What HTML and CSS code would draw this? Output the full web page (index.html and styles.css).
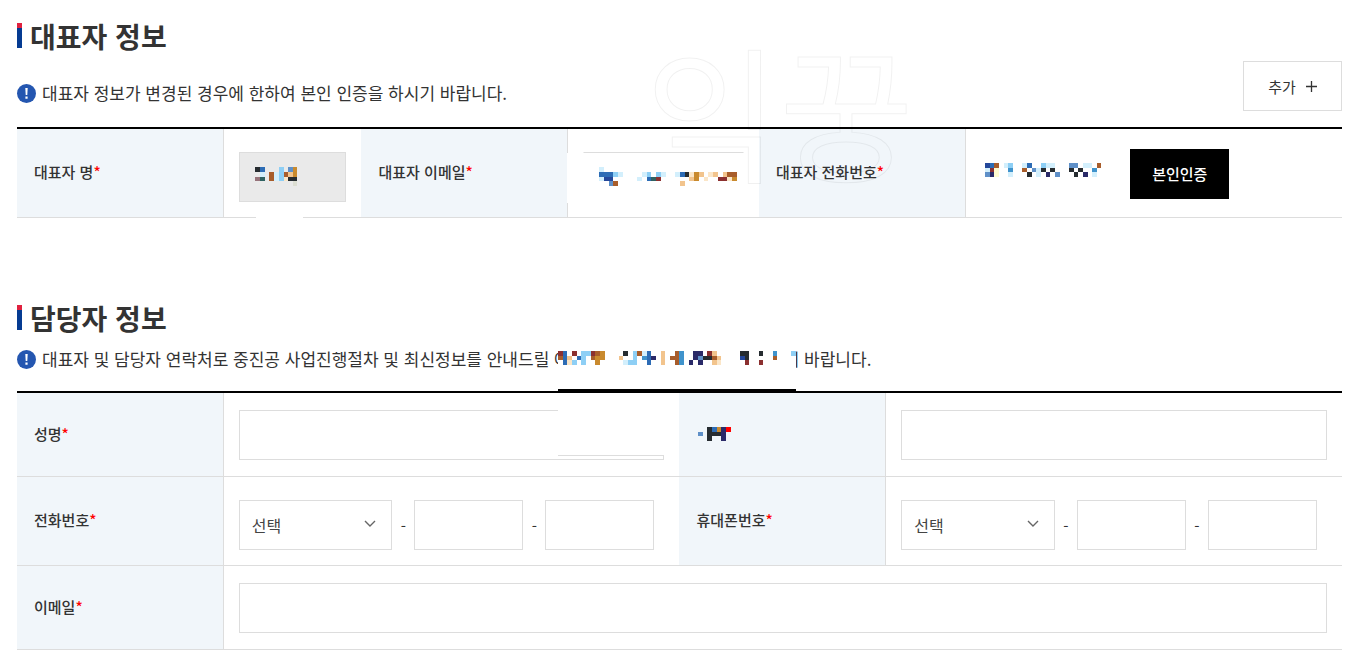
FILE: index.html
```html
<!DOCTYPE html>
<html lang="ko">
<head>
<meta charset="utf-8">
<title>대표자 정보</title>
<link rel="stylesheet" href="styles.css">
</head>
<body>
<main class="page">
  <section class="section">
    <h2 class="title">대표자 정보</h2>
    <div class="toolbar">
      <p class="notice">
        <svg class="notice-icon" viewBox="0 0 19 19" aria-hidden="true"><circle cx="9.500" cy="9.500" r="9.500" fill="#2456b0"/><path d="M8.300 4h2.400l-.4 7H8.700zM8.400 12.500h2.200v2.200H8.400z" fill="#fff"/></svg>
        <span>대표자 정보가 변경된 경우에 한하여 본인 인증을 하시기 바랍니다.</span>
      </p>
      <button type="button" class="btn btn-line">추가 <svg class="plus" viewBox="0 0 11 11" aria-hidden="true"><path d="M5.500 0v11M0 5.500h11" stroke="#333" stroke-width="1.300"/></svg></button>
    </div>
    <table class="form">
      <colgroup><col class="c-label"><col class="c-name"><col class="c-label"><col class="c-mail"><col class="c-label"><col></colgroup>
      <tbody>
        <tr>
          <th scope="row"><label for="ceo-name">대표자 명<em>*</em></label></th>
          <td class="low">
            <div class="masked">
              <input id="ceo-name" class="field field-off" type="text" disabled>
              <svg class="mosaic value" data-rows="kb...l.so/.p.aplato/mg.aplwkk/........d"></svg>
            </div>
            <span class="line-gap"></span>
          </td>
          <th scope="row"><label for="ceo-mail">대표자 이메일<em>*</em></label></th>
          <td class="low">
            <span class="side-gap"></span>
            <div class="masked">
              <input id="ceo-mail" class="field field-open" type="email">
              <svg class="mosaic value" data-rows="p............................/bbblp....pl.lp..pbkwot.wt.taa/pBB.....p.bgr......to.w..rrwo/..sa.............t..........."></svg>
            </div>
          </td>
          <th scope="row">대표자 전화번호<em>*</em></th>
          <td>
            <div class="verify">
              <svg class="mosaic mosaic-3" data-rows="Bba.pl..pb..lpp...ss.pp.a/pry..c..a.spk.k...k.k..c./sny..p...k.p.n.s...k.n.p."></svg>
              <button type="button" class="btn btn-dark">본인인증</button>
            </div>
          </td>
        </tr>
      </tbody>
    </table>
    <div class="watermark" aria-hidden="true">익꿍</div>
  </section>

  <section class="section">
    <h2 class="title">담당자 정보</h2>
    <p class="notice notice-manager">
      <svg class="notice-icon" viewBox="0 0 19 19" aria-hidden="true"><circle cx="9.500" cy="9.500" r="9.500" fill="#2456b0"/><path d="M8.300 4h2.400l-.4 7H8.700zM8.400 12.500h2.200v2.200H8.400z" fill="#fff"/></svg>
      <span>대표자 및 담당자 연락처로 중진공 사업진행절차 및 최신정보를 안내드릴 예</span>
      <span class="cover"><svg class="mosaic mosaic-3" data-rows="rb.r.llrao....k.lapb..t..ac..nn.rt.....kk..k..c...l/abt.bl.aoo...t..l.cbn.t.aac..nskkat....Bk.....a..../.bwl.l..o.....pll..b..t..ac.n.n..tw.....r..r......."></svg></span>
      <span>기 바랍니다.</span>
    </p>
    <table class="form">
      <colgroup><col class="c-label"><col class="c-half"><col class="c-label"><col></colgroup>
      <tbody>
        <tr>
          <th scope="row"><label for="m-name">성명<em>*</em></label></th>
          <td>
            <div class="masked">
              <input id="m-name" class="field" type="text">
              <span class="patch"></span>
            </div>
          </td>
          <th scope="row"><svg class="mosaic mosaic-3 mosaic-label" data-rows="..kbonR/s.kkkn./..k..n."></svg></th>
          <td><input class="field" type="text" aria-label="담당자 항목"></td>
        </tr>
        <tr>
          <th scope="row"><label for="m-tel">전화번호<em>*</em></label></th>
          <td class="low">
            <div class="phone">
              <span class="select-box"><select id="m-tel" class="field"><option>선택</option></select><svg class="chevron" viewBox="0 0 12 8" aria-hidden="true"><path d="M1 1l5 5 5-5" fill="none" stroke="#666" stroke-width="1.400"/></svg></span>
              <span class="dash">-</span>
              <input class="field" type="tel" aria-label="전화번호 가운데 자리">
              <span class="dash">-</span>
              <input class="field" type="tel" aria-label="전화번호 끝자리">
            </div>
          </td>
          <th scope="row"><label for="m-cell">휴대폰번호<em>*</em></label></th>
          <td class="low">
            <div class="phone">
              <span class="select-box"><select id="m-cell" class="field"><option>선택</option></select><svg class="chevron" viewBox="0 0 12 8" aria-hidden="true"><path d="M1 1l5 5 5-5" fill="none" stroke="#666" stroke-width="1.400"/></svg></span>
              <span class="dash">-</span>
              <input class="field" type="tel" aria-label="휴대폰번호 가운데 자리">
              <span class="dash">-</span>
              <input class="field" type="tel" aria-label="휴대폰번호 끝자리">
            </div>
          </td>
        </tr>
        <tr>
          <th scope="row"><label for="m-mail">이메일<em>*</em></label></th>
          <td colspan="3"><input id="m-mail" class="field" type="email"></td>
        </tr>
      </tbody>
    </table>
  </section>
</main>
<script src="mosaic.js"></script>
</body>
</html>
```

FILE: styles.css
```css
* { box-sizing: border-box; }
body {
  margin: 0;
  background: #fff;
  color: #333;
  font-family: "Noto Sans CJK KR", sans-serif;
  font-size: 15px;
}
.page { padding: 16px 24px 20px 17px; }
.section { position: relative; }
.section + .section { margin-top: 80px; }

.title {
  display: flex;
  align-items: center;
  gap: 8px;
  margin: 0;
  font-size: 28px;
  font-weight: 700;
  line-height: 40px;
}
.title::before {
  content: "";
  width: 5px;
  height: 25px;
  margin-bottom: 2px;
  background: linear-gradient(#e0213f 5px, #053b92 5px);
}

.toolbar {
  display: flex;
  justify-content: space-between;
  align-items: flex-end;
  margin: 5px 0 16px;
}
.notice {
  display: flex;
  align-items: center;
  margin: 0 0 6px;
  font-size: 17px;
  line-height: 24px;
  white-space: nowrap;
}
.notice-icon { width: 19px; height: 19px; margin-right: 6px; }
.notice-manager { margin: 9px 0 20px; }
.cover {
  position: relative;
  display: flex;
  margin: 0 -12px;
  padding: 3px 0 5px;
  background: #fff;
}
.cover::after {
  content: "";
  position: absolute;
  left: 0;
  right: 0;
  top: 41px;
  height: 3px;
  background: #000;
}

.btn {
  height: 50px;
  font-family: inherit;
  font-size: 15px;
}
.btn-line {
  display: flex;
  align-items: center;
  justify-content: center;
  gap: 10px;
  width: 99px;
  background: #fff;
  border: 1px solid #ddd;
  color: #333;
}
.plus { width: 11px; height: 11px; }
.btn-dark {
  width: 99px;
  padding: 0;
  background: #000;
  border: 0;
  color: #fff;
  font-weight: 500;
}

.form {
  width: 100%;
  table-layout: fixed;
  border-collapse: separate;
  border-spacing: 0;
  border-top: 2px solid #000;
}
.c-label { width: 15.6%; }
.c-name { width: 10.4%; }
.c-mail { width: 14.4%; }
.c-half { width: 34.4%; }
th {
  padding: 0 17px 2px;
  background: #f1f6fa;
  border-right: 1px solid #ddd;
  border-bottom: 1px solid #ddd;
  font-weight: 500;
  line-height: 22px;
  text-align: left;
}
th em { color: #f00; font-style: normal; }
td {
  position: relative;
  padding: 17px 15px 16px;
  border-bottom: 1px solid #ddd;
}
td.low { padding-top: 23px; padding-bottom: 15px; }

.field {
  display: block;
  width: 100%;
  height: 50px;
  padding: 0 12px;
  background: #fff;
  border: 1px solid #ddd;
  border-radius: 0;
  color: #444;
  font-family: inherit;
  font-size: 16px;
}
.field-off { background: #eaeaea; }
.field-open { border-color: #ddd transparent transparent; }

.masked { position: relative; }
.mosaic { display: block; height: 19px; }
.mosaic-3 { height: 14px; }
.mosaic-label { margin: 0 2px; }
.value { position: absolute; left: 16px; top: 15px; }
.line-gap {
  position: absolute;
  left: 32px;
  bottom: -1px;
  width: 47px;
  height: 1px;
  background: #fff;
}
.side-gap {
  position: absolute;
  left: -1px;
  top: 24px;
  width: 2px;
  height: 50px;
  background: #fff;
}
.patch {
  position: absolute;
  top: 0;
  right: 0;
  width: 25%;
  height: 46px;
  background: #fff;
  border-bottom: 1px solid #ddd;
}

.verify { display: flex; align-items: center; gap: 29px; padding-left: 4px; }
.verify .mosaic { margin-bottom: 8px; }

.phone { display: flex; align-items: center; gap: 8px; padding-right: 10px; }
.phone > .field { flex: 108 1 0; min-width: 0; padding: 0; text-indent: 12px; }
.select-box { position: relative; flex: 155 1 0; min-width: 0; }
.select-box .field { appearance: none; }
.chevron {
  position: absolute;
  right: 16px;
  top: 20px;
  width: 12px;
  height: 8px;
  pointer-events: none;
}
.dash { width: 6px; text-align: center; }

.watermark {
  position: absolute;
  left: 48%;
  top: 14px;
  margin-left: -8px;
  color: transparent;
  font-size: 146px;
  font-weight: 400;
  line-height: 156px;
  pointer-events: none;
  white-space: nowrap;
  -webkit-text-stroke: 1px rgba(0, 0, 0, 0.06);
}
```

FILE: mosaic.js
```js
const palette = {
  k: "#262c30", n: "#2a2a68", b: "#2d6cb5", B: "#24479a", s: "#5f90c8",
  l: "#8ecff5", p: "#d3effc", c: "#3f93cc", o: "#c98a2e", t: "#f2c48d",
  w: "#fbe6c8", r: "#8b3030", a: "#a85d2b", m: "#96737a", g: "#2f6262",
  R: "#ff0000", y: "#fffbd0", d: "#dcded2"
};

document.querySelectorAll(".mosaic").forEach((svg) => {
  const rows = svg.dataset.rows.split("/");
  svg.setAttribute("viewBox", `0 0 ${rows[0].length} ${rows.length}`);
  svg.setAttribute("shape-rendering", "crispEdges");
  rows.forEach((row, y) => {
    [...row].forEach((key, x) => {
      if (!palette[key]) return;
      const cell = document.createElementNS("http://www.w3.org/2000/svg", "rect");
      cell.setAttribute("x", x);
      cell.setAttribute("y", y);
      cell.setAttribute("width", 1);
      cell.setAttribute("height", 1);
      cell.setAttribute("fill", palette[key]);
      svg.append(cell);
    });
  });
});
```
